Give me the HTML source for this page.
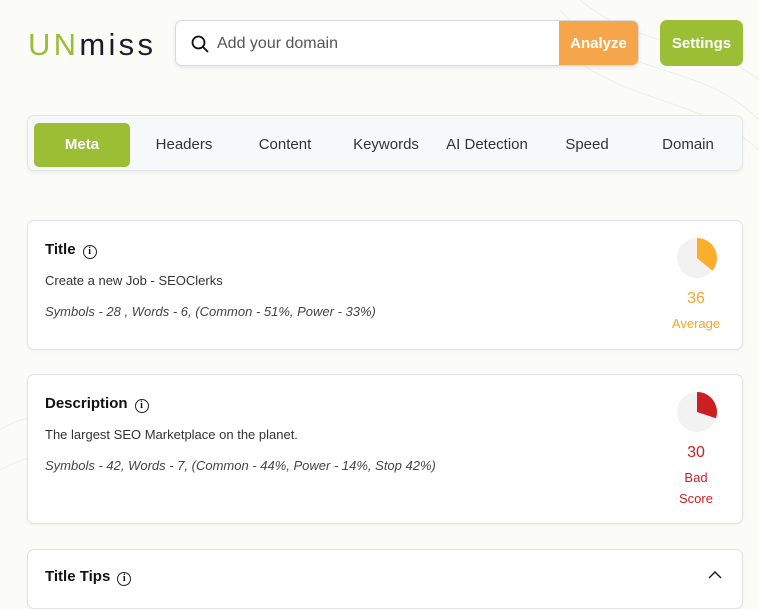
<!DOCTYPE html>
<html><head><meta charset="utf-8"><style>
*{box-sizing:border-box;margin:0;padding:0}
body{width:759px;height:578px;overflow:hidden;background:#fbfbf8;font-family:"Liberation Sans",sans-serif;position:relative;color:#222}
.abs{position:absolute}
.logo{left:28px;top:27px;font-size:31px;letter-spacing:3.3px;line-height:36px}
.search{left:175px;top:20px;width:464px;height:46px;background:#fff;border:1px solid #d8dbe0;border-radius:7px;box-shadow:0 2px 4px rgba(0,0,0,.08);overflow:hidden}
.search .ph{position:absolute;left:41px;top:14px;font-size:16px;color:#555}
.analyze{position:absolute;right:0;top:0;width:79px;height:46px;background:#f5a54a;color:#fff;font-weight:bold;font-size:15px;text-align:center;line-height:46px}
.settings{left:660px;top:20px;width:83px;height:46px;background:#9bbe35;border-radius:7px;color:#fff;font-weight:bold;font-size:15px;text-align:center;line-height:48px}
.tabs{left:27px;top:115px;width:716px;height:56px;background:#f7f8fa;border:1px solid #e3e5e8;border-radius:7px;box-shadow:0 2px 4px rgba(0,0,0,.06)}
.tab{position:absolute;top:7px;height:44px;line-height:44px;font-size:15px;color:#333;text-align:center}
.tab.on{background:#9bbe35;color:#fff;font-weight:bold;border-radius:5px}
.card{left:27px;width:716px;background:#fff;border:1px solid #e0e2e5;border-radius:7px;box-shadow:0 1px 3px rgba(0,0,0,.05)}
.h{position:absolute;left:17px;font-size:15px;font-weight:bold;color:#111}
.info{display:inline-block;width:14px;height:14px;border:1.4px solid #222;border-radius:50%;font-size:10px;line-height:11px;text-align:center;font-weight:bold;vertical-align:-1px;margin-left:7px;font-family:"Liberation Serif",serif;position:relative;top:-1px}
.t{position:absolute;left:17px;font-size:13px;color:#333}
.i{position:absolute;left:17px;font-size:13px;color:#444;font-style:italic}
.sc{position:absolute;width:80px;left:628px;text-align:center;font-size:13px;line-height:25px}
</style></head><body>
<svg class="abs" style="left:0;top:0" width="759" height="578">
<g fill="none" stroke="#e6edd6" stroke-width="1" opacity=".7">
<path d="M560 10 C620 80 700 60 759 120"/><path d="M540 30 C620 110 690 90 759 150"/><path d="M580 0 C640 50 710 40 759 80"/>
<path d="M0 430 C80 380 160 470 260 420"/><path d="M0 470 C90 420 170 500 280 450"/><path d="M440 400 C520 380 600 400 680 390"/>
</g></svg>
<div class="abs logo"><span style="color:#9bbe35">UN</span><span style="color:#1c1c28">miss</span></div>
<div class="abs search">
<svg style="position:absolute;left:15px;top:14px" width="18" height="18" viewBox="0 0 18 18"><circle cx="7.5" cy="7.5" r="6" fill="none" stroke="#111" stroke-width="1.8"/><path d="M12 12 L16.5 16.5" stroke="#111" stroke-width="1.8" stroke-linecap="round"/></svg>
<div class="ph">Add your domain</div>
<div class="analyze">Analyze</div></div>
<div class="abs settings">Settings</div>
<div class="abs tabs">
<div class="tab on" style="left:6px;width:96px">Meta</div>
<div class="tab" style="left:106px;width:100px">Headers</div>
<div class="tab" style="left:207px;width:100px">Content</div>
<div class="tab" style="left:308px;width:100px">Keywords</div>
<div class="tab" style="left:409px;width:100px">AI Detection</div>
<div class="tab" style="left:509px;width:100px">Speed</div>
<div class="tab" style="left:610px;width:100px">Domain</div>
</div>
<div class="abs card" style="top:220px;height:130px">
<div class="h" style="top:20px">Title<span class="info">i</span></div>
<div class="t" style="top:52px">Create a new Job - SEOClerks</div>
<div class="i" style="top:83px">Symbols - 28 , Words - 6, (Common - 51%, Power - 33%)</div>
<svg style="position:absolute;left:648px;top:16px" width="42" height="42" viewBox="-21 -21 42 42"><circle r="20" fill="#f2f2f2"/><path d="M0 0 L0 -20 A20 20 0 0 1 15.4 12.7 Z" fill="#fbae29"/></svg>
<div class="sc" style="top:65px;color:#f5a52a;font-size:16px">36</div>
<div class="sc" style="top:90px;color:#f5a52a">Average</div>
</div>
<div class="abs card" style="top:374px;height:150px">
<div class="h" style="top:20px">Description<span class="info">i</span></div>
<div class="t" style="top:52px">The largest SEO Marketplace on the planet.</div>
<div class="i" style="top:83px">Symbols - 42, Words - 7, (Common - 44%, Power - 14%, Stop 42%)</div>
<svg style="position:absolute;left:648px;top:16px" width="42" height="42" viewBox="-21 -21 42 42"><circle r="20" fill="#f2f2f2"/><path d="M0 0 L0 -20 A20 20 0 0 1 19 6.2 Z" fill="#cc1f22"/></svg>
<div class="sc" style="top:65px;color:#cc1f22;font-size:16px">30</div>
<div class="sc" style="top:90px;color:#cc1f22">Bad</div>
<div class="sc" style="top:111px;color:#cc1f22">Score</div>
</div>
<div class="abs card" style="top:549px;height:60px">
<div class="h" style="top:18px">Title Tips<span class="info">i</span></div>
<svg style="position:absolute;left:680px;top:20px" width="14" height="10"><path d="M1 8 L7 2 L13 8" fill="none" stroke="#222" stroke-width="1.5"/></svg>
</div>
</body></html>
